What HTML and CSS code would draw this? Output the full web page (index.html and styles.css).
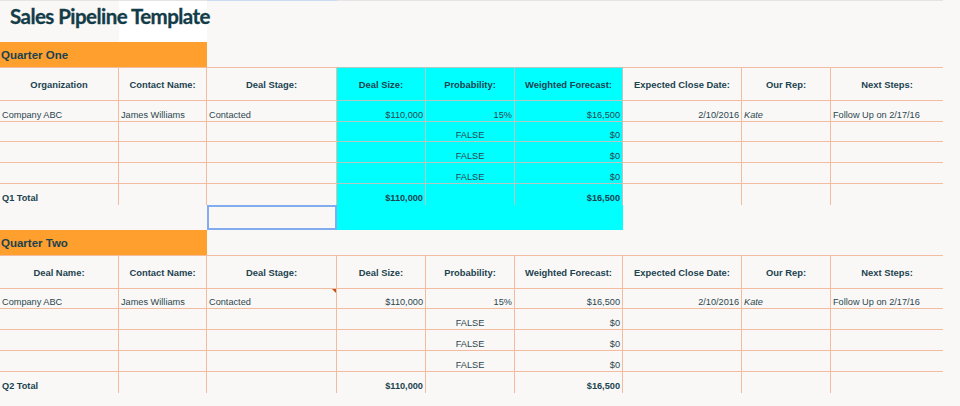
FILE: index.html
```html
<!DOCTYPE html>
<html>
<head>
<meta charset="utf-8">
<link rel="stylesheet" href="styles.css">
</head>
<body>
<div class="sheet">
  <div class="row strip"><span></span><span></span><span class="sel"></span><span></span><span></span><span></span><span></span><span></span><span></span></div>
  <div class="row title-row"><h1 class="title">Sales Pipeline Template</h1></div>
  <div class="row band-row"><div class="band">Quarter One</div></div>

  <div class="row head">
    <div class="c">Organization</div>
    <div class="c">Contact Name:</div>
    <div class="c">Deal Stage:</div>
    <div class="c hl">Deal Size:</div>
    <div class="c hl">Probability:</div>
    <div class="c hl">Weighted Forecast:</div>
    <div class="c">Expected Close Date:</div>
    <div class="c">Our Rep:</div>
    <div class="c last">Next Steps:</div>
  </div>
  <div class="row d h21">
    <div class="c">Company ABC</div>
    <div class="c">James Williams</div>
    <div class="c">Contacted</div>
    <div class="c hl r">$110,000</div>
    <div class="c hl r">15%</div>
    <div class="c hl r">$16,500</div>
    <div class="c r">2/10/2016</div>
    <div class="c i">Kate</div>
    <div class="c last">Follow Up on 2/17/16</div>
  </div>
  <div class="row d h20">
    <div class="c"></div><div class="c"></div><div class="c"></div>
    <div class="c hl"></div><div class="c hl ctr">FALSE</div><div class="c hl r">$0</div>
    <div class="c"></div><div class="c"></div><div class="c last"></div>
  </div>
  <div class="row d h21">
    <div class="c"></div><div class="c"></div><div class="c"></div>
    <div class="c hl"></div><div class="c hl ctr">FALSE</div><div class="c hl r">$0</div>
    <div class="c"></div><div class="c"></div><div class="c last"></div>
  </div>
  <div class="row d h21">
    <div class="c"></div><div class="c"></div><div class="c"></div>
    <div class="c hl"></div><div class="c hl ctr">FALSE</div><div class="c hl r">$0</div>
    <div class="c"></div><div class="c"></div><div class="c last"></div>
  </div>
  <div class="row total">
    <div class="c">Q1 Total</div><div class="c"></div><div class="c"></div>
    <div class="c hl r">$110,000</div><div class="c hl"></div><div class="c hl r">$16,500</div>
    <div class="c"></div><div class="c"></div><div class="c last"></div>
  </div>
  <div class="row gap">
    <div class="e"></div><div class="e"></div><div class="e selected"></div>
    <div class="e cyan"></div>
  </div>

  <div class="row band-row"><div class="band">Quarter Two</div></div>

  <div class="row head">
    <div class="c">Deal Name:</div>
    <div class="c">Contact Name:</div>
    <div class="c">Deal Stage:</div>
    <div class="c">Deal Size:</div>
    <div class="c">Probability:</div>
    <div class="c">Weighted Forecast:</div>
    <div class="c">Expected Close Date:</div>
    <div class="c">Our Rep:</div>
    <div class="c last">Next Steps:</div>
  </div>
  <div class="row d h20">
    <div class="c">Company ABC</div>
    <div class="c">James Williams</div>
    <div class="c note">Contacted</div>
    <div class="c r">$110,000</div>
    <div class="c r">15%</div>
    <div class="c r">$16,500</div>
    <div class="c r">2/10/2016</div>
    <div class="c i">Kate</div>
    <div class="c last">Follow Up on 2/17/16</div>
  </div>
  <div class="row d h21">
    <div class="c"></div><div class="c"></div><div class="c"></div>
    <div class="c"></div><div class="c ctr">FALSE</div><div class="c r">$0</div>
    <div class="c"></div><div class="c"></div><div class="c last"></div>
  </div>
  <div class="row d h21">
    <div class="c"></div><div class="c"></div><div class="c"></div>
    <div class="c"></div><div class="c ctr">FALSE</div><div class="c r">$0</div>
    <div class="c"></div><div class="c"></div><div class="c last"></div>
  </div>
  <div class="row d h21">
    <div class="c"></div><div class="c"></div><div class="c"></div>
    <div class="c"></div><div class="c ctr">FALSE</div><div class="c r">$0</div>
    <div class="c"></div><div class="c"></div><div class="c last"></div>
  </div>
  <div class="row total">
    <div class="c">Q2 Total</div><div class="c"></div><div class="c"></div>
    <div class="c r">$110,000</div><div class="c"></div><div class="c r">$16,500</div>
    <div class="c"></div><div class="c"></div><div class="c last"></div>
  </div>
</div>
</body>
</html>
```
FILE: styles.css
```css
html, body {
  margin: 0;
  padding: 0;
  background: #f9f8f6;
}

.sheet {
  display: flex;
  flex-direction: column;
  font-family: "Liberation Sans", Arial, sans-serif;
  color: #2b4650;
}

.row {
  display: grid;
  grid-template-columns: 119px 88px 130px 89px 89px 108px 119px 89px 112px;
}

.strip {
  height: 1px;
}
.strip span {
  background: #e4e4e4;
}
.strip span.sel {
  background: #c9daf3;
}

.title-row {
  height: 41px;
}
.title {
  grid-column: 1 / span 2;
  margin: 0;
  padding: 5px 0 0 10px;
  font-family: Lato, "Liberation Sans", sans-serif;
  font-weight: 700;
  font-size: 20.5px;
  letter-spacing: -0.55px;
  line-height: 21px;
  color: #143c48;
  white-space: nowrap;
  -webkit-text-stroke: 0.3px #143c48;
  background: linear-gradient(to right, transparent 119px, #ffffff 119px);
}

.band-row {
  height: 25px;
}
.band {
  grid-column: 1 / span 2;
  background: #ff9f2d;
  color: #1a4250;
  font-weight: 700;
  font-size: 11.5px;
  display: flex;
  align-items: center;
  padding-left: 1px;
  padding-top: 1px;
}

.c {
  box-sizing: border-box;
  border-right: 1px solid #f4bc9e;
  border-bottom: 1px solid #f4bc9e;
  font-size: 9.2px;
  line-height: 11px;
  padding: 0 2px;
  display: flex;
  align-items: flex-end;
  white-space: nowrap;
  overflow: hidden;
  position: relative;
}
.c.last {
  border-right: 0;
}
.c.hl {
  background: #00ffff;
  border-color: #b2c8c0;
}
.c.r { justify-content: flex-end; }
.c.ctr { justify-content: center; }
.c.i { font-style: italic; }

.head .c {
  height: 34px;
  border-top: 1px solid #f4bc9e;
  font-weight: 700;
  font-size: 9.4px;
  color: #1c4350;
  align-items: center;
  justify-content: center;
}
.head .c.hl {
  border-top-color: #b2c8c0;
}

.h21 .c { height: 21px; }
.h20 .c { height: 20px; }

.total .c {
  height: 21px;
  border-bottom: 0;
  font-weight: 700;
  color: #1c4350;
  padding-bottom: 1px;
}

.gap {
  height: 25px;
}
.e.selected {
  border: 2px solid #83acef;
  box-sizing: border-box;
}
.e.cyan {
  grid-column: 4 / span 3;
  background: #00ffff;
}

.note::after {
  content: "";
  position: absolute;
  top: 0;
  right: 0;
  border-top: 4px solid #c0521c;
  border-left: 4px solid transparent;
}
```
